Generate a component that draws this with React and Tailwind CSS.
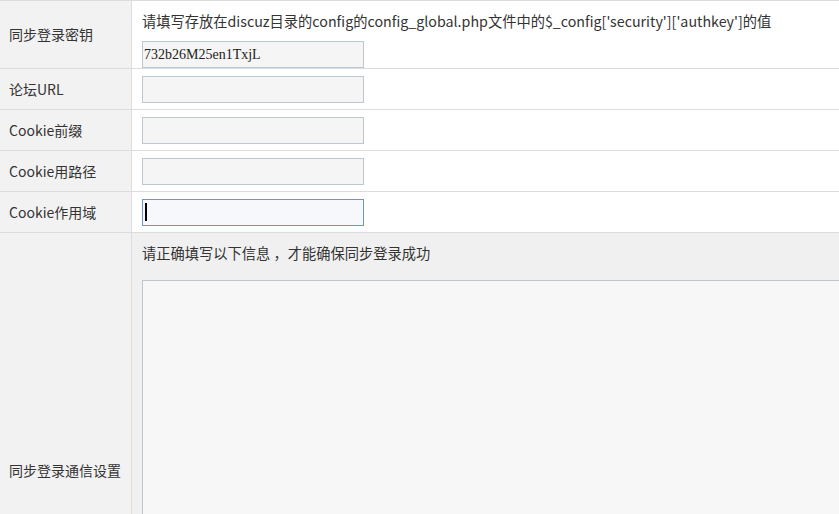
import React from "react";

const font = { fontFamily: '"Noto Sans CJK SC", "Noto Sans", sans-serif' };

function Row({ label, children, rightClass = "bg-white", h, labelClass = "" }) {
  return (
    <div className={`flex border-b border-[#dcdcdc] ${h}`}>
      <div className={`w-[132px] shrink-0 bg-[#f2f2f2] border-r border-[#dcdcdc] flex items-center pl-[9px] text-[14px] text-[#333] ${labelClass}`}>
        {label}
      </div>
      <div className={`flex-1 pl-[10px] ${rightClass}`}>{children}</div>
    </div>
  );
}

function Input({ value = "" }) {
  return (
    <div
      className="w-[222px] h-[27px] bg-[#f5f5f5] border border-[#bcc8ce] flex items-center pl-[1px] text-[14px] text-[#222]"
      style={{ fontFamily: '"Liberation Serif", serif' }}
    >
      {value}
    </div>
  );
}

function FocusedInput() {
  return (
    <div className="w-[222px] h-[27px] bg-[#f6f8fb] border border-[#6f93cc] flex items-center pl-[2px]">
      <span className="w-[2px] h-[18px] bg-black" />
    </div>
  );
}

export default function App() {
  return (
    <div className="w-[839px] h-[514px] overflow-hidden bg-white" style={font}>
      <div className="border-t border-[#dcdcdc]">
        <Row label="同步登录密钥" h="h-[68px]">
          <div className="pt-[10px] text-[14.25px] leading-[20px] text-[#333] whitespace-nowrap">
            请填写存放在discuz目录的config的config_global.php文件中的$_config['security']['authkey']的值
          </div>
          <div className="mt-[10px]">
            <Input value="732b26M25en1TxjL" />
          </div>
        </Row>
        <Row label="论坛URL" h="h-[41px]">
          <div className="h-full flex items-center">
            <Input />
          </div>
        </Row>
        <Row label="Cookie前缀" h="h-[41px]">
          <div className="h-full flex items-center">
            <Input />
          </div>
        </Row>
        <Row label="Cookie用路径" h="h-[41px]">
          <div className="h-full flex items-center">
            <Input />
          </div>
        </Row>
        <Row label="Cookie作用域" h="h-[41px]">
          <div className="h-full flex items-center">
            <FocusedInput />
          </div>
        </Row>
        <Row label="同步登录通信设置" h="h-[475px]" rightClass="bg-[#f0f0f0]">
          <div className="pt-[10px] text-[14.25px] leading-[20px] text-[#333] whitespace-nowrap">
            请正确填写以下信息 ，才能确保同步登录成功
          </div>
          <div className="mt-[17px] w-[760px] h-[410px] bg-[#f7f7f7] border border-[#bcc8ce]" />
        </Row>
      </div>
    </div>
  );
}
